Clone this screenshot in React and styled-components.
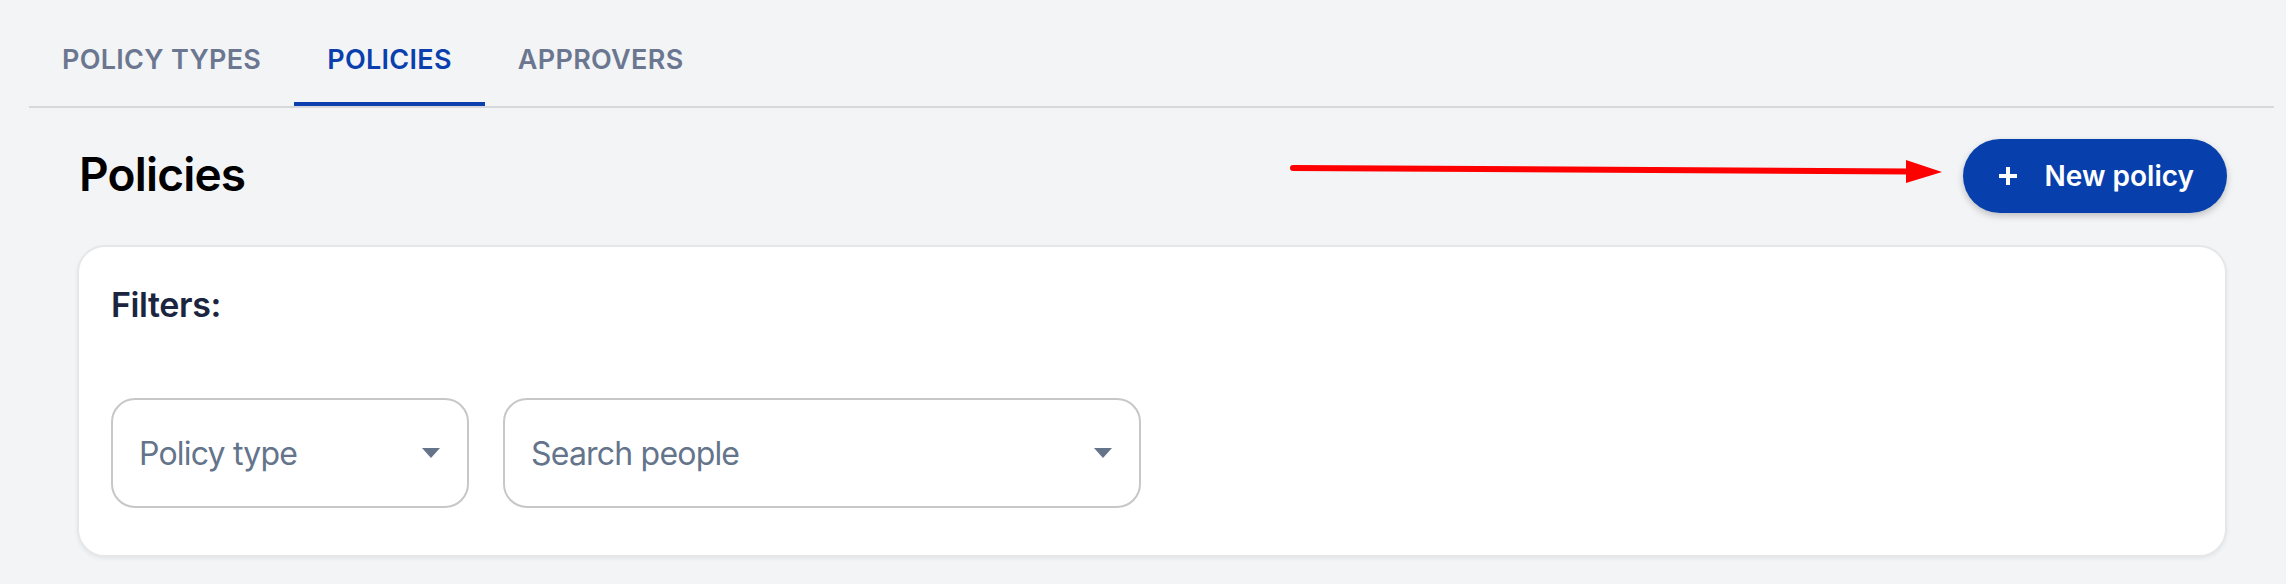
import React, { useState } from "react";
import styled, { createGlobalStyle } from "styled-components";

const GlobalStyle = createGlobalStyle`
  body {
    margin: 0;
    background: #f3f4f6;
    font-family: Inter, "Noto Sans", "Liberation Sans", sans-serif;
  }
`;

const Page = styled.div`
  position: relative;
  width: 2286px;
  height: 584px;
  box-sizing: border-box;
  padding: 12px 12px 0 29px;
`;

const TabBar = styled.div`
  display: flex;
  border-bottom: 2px solid #d6d8dc;
`;

const Tab = styled.button`
  height: 94px;
  padding: 0 33px;
  border: none;
  background: none;
  font-family: inherit;
  font-size: 27px;
  font-weight: 600;
  letter-spacing: 0.3px;
  text-transform: uppercase;
  color: ${(props) => (props.active ? "#0b3fae" : "#6b7790")};
  box-shadow: ${(props) => (props.active ? "inset 0 -4px 0 #0b3fae" : "none")};
  cursor: pointer;
`;

const Content = styled.div`
  margin: 0 47px 0 48px;
`;

const Header = styled.div`
  display: flex;
  justify-content: space-between;
  align-items: center;
  padding: 31px 0 32px;
`;

const Title = styled.h1`
  margin: 0 0 5px 2px;
  font-size: 46px;
  font-weight: 600;
  letter-spacing: -0.8px;
  color: #000;
`;

const PrimaryButton = styled.button`
  display: flex;
  align-items: center;
  gap: 27px;
  height: 74px;
  padding: 0 33px 0 35px;
  border: none;
  border-radius: 37px;
  background: #073fac;
  color: #fff;
  font-family: inherit;
  font-size: 28px;
  font-weight: 600;
  box-shadow: 0 3px 7px rgba(0, 0, 0, 0.22);
  cursor: pointer;
`;

const Card = styled.div`
  background: #fff;
  border: 2px solid #e6e7ea;
  border-radius: 28px;
  padding: 38px 32px 47px;
  box-shadow: 0 2px 4px rgba(0, 0, 0, 0.06);
`;

const CardTitle = styled.div`
  font-size: 34px;
  line-height: 40px;
  font-weight: 600;
  letter-spacing: -0.4px;
  color: #1b2540;
`;

const FilterRow = styled.div`
  display: flex;
  gap: 34px;
  margin-top: 73px;
`;

const Select = styled.div`
  display: flex;
  align-items: center;
  justify-content: space-between;
  width: ${(props) => props.width}px;
  height: 110px;
  box-sizing: border-box;
  padding: 0 27px 0 26px;
  border: 2px solid #c7c7c9;
  border-radius: 24px;
  font-size: 32px;
  letter-spacing: -0.8px;
  color: #64748b;
  cursor: pointer;
`;

const Caret = styled.span`
  width: 0;
  height: 0;
  border-left: 9.5px solid transparent;
  border-right: 9.5px solid transparent;
  border-top: 10px solid #64748b;
`;

const Annotation = styled.svg`
  position: absolute;
  top: 0;
  left: 0;
  pointer-events: none;
`;

const PlusIcon = () => (
  <svg width="20" height="20" viewBox="0 0 20 20">
    <path d="M10 1v18M1 10h18" stroke="#fff" strokeWidth="4" />
  </svg>
);

const tabs = ["Policy types", "Policies", "Approvers"];

export default function App() {
  const [activeTab, setActiveTab] = useState(1);

  return (
    <Page>
      <GlobalStyle />
      <TabBar>
        {tabs.map((t, i) => (
          <Tab key={t} active={i === activeTab} onClick={() => setActiveTab(i)}>
            {t}
          </Tab>
        ))}
      </TabBar>
      <Content>
        <Header>
          <Title>Policies</Title>
          <PrimaryButton>
            <PlusIcon />
            New policy
          </PrimaryButton>
        </Header>
        <Card>
          <CardTitle>Filters:</CardTitle>
          <FilterRow>
            <Select width={358}>
              Policy type
              <Caret />
            </Select>
            <Select width={638}>
              Search people
              <Caret />
            </Select>
          </FilterRow>
        </Card>
      </Content>
      <Annotation width="2286" height="584">
        <line x1="1293" y1="168" x2="1910" y2="171.5" stroke="#ff0000" strokeWidth="6" strokeLinecap="round" />
        <polygon points="1906,160 1942,172 1906,183" fill="#ff0000" />
      </Annotation>
    </Page>
  );
}
